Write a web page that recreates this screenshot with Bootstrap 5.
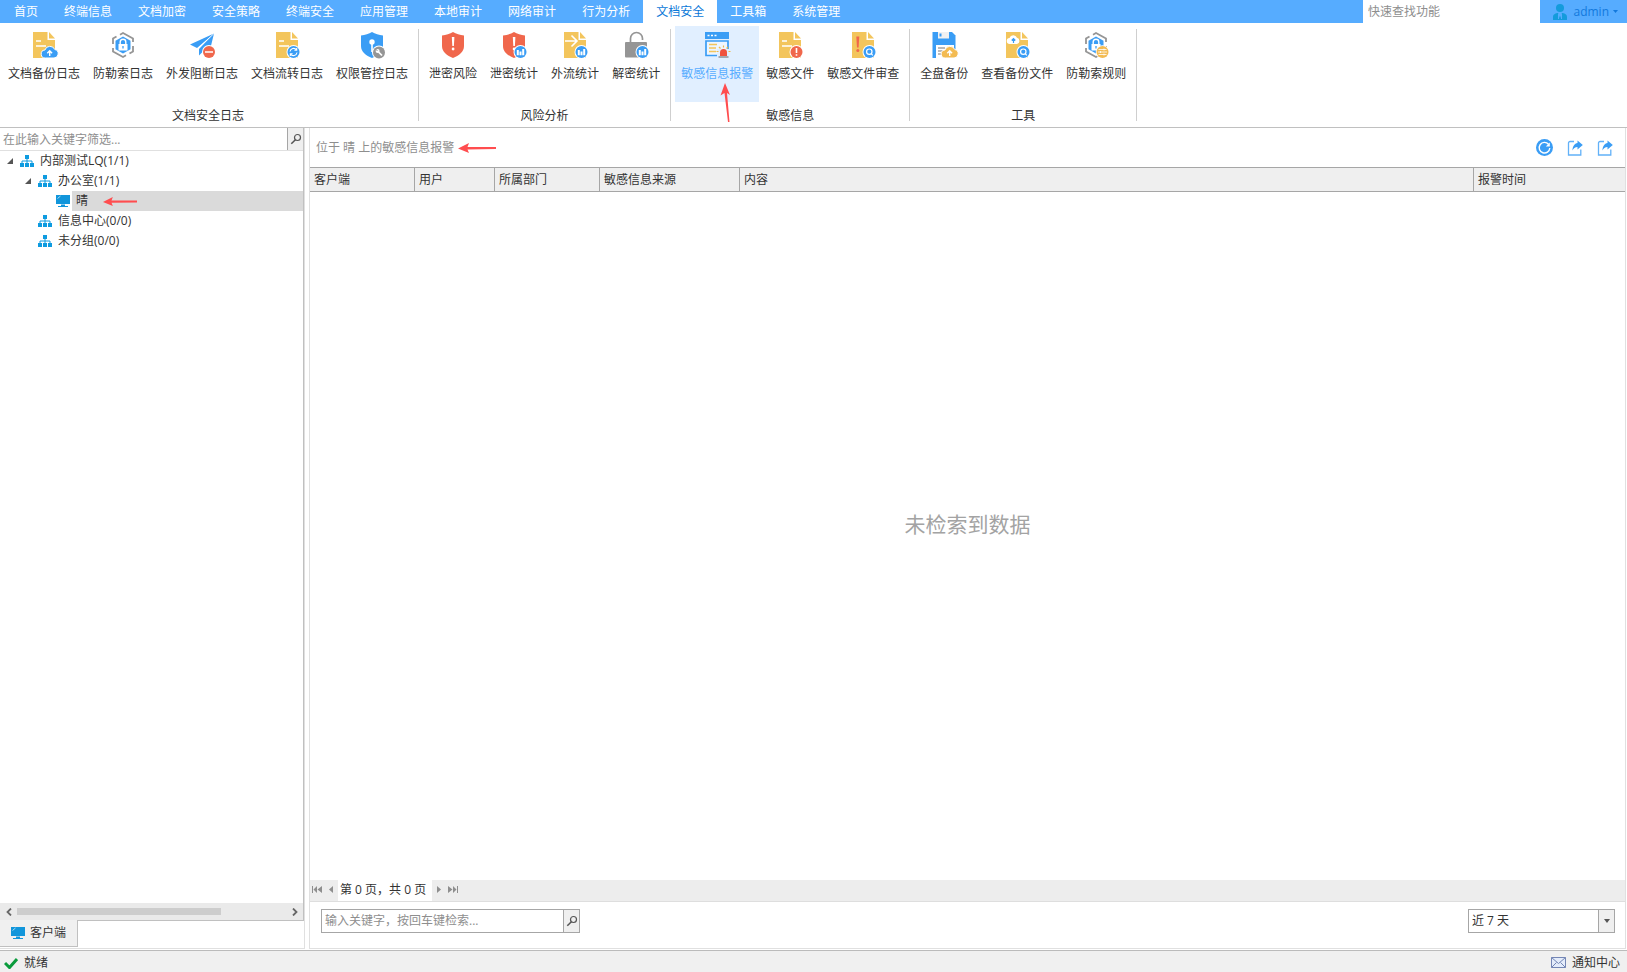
<!DOCTYPE html>
<html lang="zh-CN">
<head>
<meta charset="utf-8">
<meta name="viewport" content="width=device-width, initial-scale=1">
<title>文档安全</title>
<link href="https://cdn.jsdelivr.net/npm/bootstrap@5.3.0/dist/css/bootstrap.min.css" rel="stylesheet">
<style>
:root{--sky:#56acff;--blue:#3a9df5;--line:#a6a6a6;--soft:#c0c0c0;--pale:#e0e0e0;--bar:#efefef}
body{font:12px/20px "Open Sans","Noto Sans CJK SC",sans-serif;color:#333;background:#fff}
svg{display:block;flex:none}
button,input,select{font:inherit;color:inherit;border:0;background:none;padding:0;border-radius:0}
input::placeholder{color:#8e8e8e;opacity:1}
.topbar{background:var(--sky);height:23px}
.topbar .nav{padding-left:1px}
.topbar .nav-link{padding:0 13px;line-height:23px;color:#fff;border-radius:0}
.topbar .nav-link.active{background:#fff;color:#0a78d8}
.quick{width:177px;height:23px;padding:0 5px 1px;background:#fff}
.user{width:87px;color:#1279dd;padding:0 9px 0 12px}
.ribbon{border-bottom:1px solid var(--soft);height:105px;padding-top:3px;flex:none}
.rgroup{position:relative;padding:0 5px 0 4px}
.rgroup:first-child{padding-left:2px}
.rgroup::after{content:"";position:absolute;right:0;top:3px;height:92px;border-right:1px solid #cfcfcf}
.ritems{display:flex;gap:1px}
.ritem{display:flex;flex-direction:column;align-items:center;gap:3px;padding:3px 6px 0;height:76px;color:#333;position:relative;white-space:nowrap}
.ritem.active{background:#e1efff;color:var(--sky)}
.ritem svg.ico{width:32px;height:32px}
.caption{line-height:28px}
.arrow{position:absolute;fill:#ff4d4f}
.arrow-up{left:45px;top:57px}
.arrow-row{left:31px;top:5px}
.panes{min-height:0}
.side{width:305px;border-right:1px solid var(--pale);border-bottom:1px solid var(--pale);margin-bottom:1px}
.tree-box{border-right:1px solid var(--soft);border-bottom:1px solid var(--soft)}
.filter{height:23px;border-bottom:1px solid var(--pale)}
.filter input{padding:2px 3px 0}
.find{width:16px;background:var(--bar);border-left:1px solid var(--line);display:flex;align-items:center;justify-content:center}
.tree-row{height:20px;display:flex;align-items:center}
.tree-row .caret{width:20px;padding-left:7px}
.lv2 .caret{width:38px;padding-left:25px}
.lv3 .caret{width:56px}
.tree-row .label{padding:0 4px;margin-left:2px}
.tree-row .selected{background:#dadada;position:relative;flex:1}
.hscroll{height:17px;background:#eaeaea}
.hscroll button{width:17px;height:17px;display:flex;align-items:center;justify-content:center}
.hscroll .rail{flex:1;height:7px}
.hscroll .thumb{background:#cdcdcd;width:76%;height:7px}
.side-tabs{padding-bottom:1px}
.side-tab{height:27px;padding:0 11px;background:#f0f0f0;border-right:1px solid var(--soft);border-bottom:1px solid var(--soft);margin-top:-1px;z-index:1;gap:5px}
.work{border:solid var(--pale);border-width:0 1px 1px;margin:0 1px 1px 4px;min-width:0}
.crumb{height:39px;padding:0 12px 0 6px;color:#8e8e8e}
.tools{gap:14px}
.grid-head{table-layout:fixed;width:100%;border-collapse:separate;border-spacing:0}
.grid-head th{font-weight:400;height:25px;line-height:23px;padding:0 4px;background:var(--bar);border:solid var(--line);border-width:1px 1px 1px 0}
.grid-head th:last-child{border-right:0}
.c-client,.c-dept{width:105px}.c-user{width:80px}.c-from{width:140px}.c-time{width:151px}
.nodata{font-size:21px;color:#a3a3a3;line-height:30px;padding-bottom:24px}
.pager{height:22px;background:#ededed;border-bottom:1px solid #dedede}
.pager button{height:19px;display:flex;align-items:center;justify-content:center;width:14px}
.pager .pageno{background:#fff;padding:0 2px;width:94px;white-space:nowrap}
.searchbar{height:46px;padding:7px 10px 0 11px}
.fieldbox{height:24px;border:1px solid var(--line)}
.fieldbox input,.fieldbox select{padding:0 3px;outline:0;flex:1;min-width:0}
.kw{width:259px}
.range{width:147px;position:relative}
.range select{appearance:none;padding-right:20px}
.range .drop{position:absolute;right:0;top:0;bottom:0;width:16px;pointer-events:none}
.statusbar{height:22px;border-top:1px solid #bbb;background:#f0f0f0;padding:2px 7px 0 4px;flex:none}
.statusbar,.statusbar a{gap:6px}
</style>
</head>
<body class="vh-100 d-flex flex-column overflow-hidden">

<svg width="0" height="0" class="position-absolute" aria-hidden="true">
  <defs>
    <g id="doc"><path d="M5 3h14.500v8H27v18H5z" fill="#f3c55c"/><path d="M21 3l6 6.500h-6z" fill="#f3c55c"/></g>
    <g id="doclines"><path d="M8 12h5M8 17h10" stroke="#fff" stroke-width="1.300"/></g>
    <g id="shield"><path d="M16 3c3 2 7 3 11 3.500V17c0 6-5 9.500-11 12C10 26.500 5 23 5 17V6.500C9 6 13 5 16 3z" fill="#f0674c"/><path d="M14.800 8h2.600l-.5 9h-1.600z" fill="#fff"/><circle cx="16.100" cy="20" r="1.400" fill="#fff"/></g>
    <g id="lens"><circle cx="22.500" cy="23" r="7" fill="#fff"/><circle cx="22.500" cy="23" r="6" fill="#3a9df5"/><circle cx="22.300" cy="22.700" r="2.700" fill="none" stroke="#fff" stroke-width="1.200"/><path d="M24.200 24.700l1.600 1.600" stroke="#fff" stroke-width="1.200"/></g>
    <g id="chart"><circle cx="22.500" cy="23" r="7" fill="#fff"/><circle cx="22.500" cy="23" r="6" fill="#3a9df5"/><path d="M18.800 21h2v5.200h-2zM21.500 22.500h2v3.700h-2zM24.200 20h2v6.200h-2z" fill="#fff"/></g>
    <g id="hexa"><path d="M13 5.700l3-1.700 10 5.500v3.500M26 17v5.500l-3.500 2M19 26.300L16 28 6 22.500V19M6 15V9.500l3.500-2" fill="none" stroke="#959595" stroke-width="1.800"/><path d="M16 7.500l7.500 4.200v8.600L16 24.500l-7.500-4.200v-8.600z" fill="#3a9df5"/><path d="M11.500 15h9v6.500h-9z" fill="#fff"/><path d="M13.200 15v-2a2.800 2.800 0 0 1 5.600 0v2" fill="none" stroke="#fff" stroke-width="1.400"/><path d="M16 17v2.500" stroke="#3a9df5" stroke-width="1.300"/></g>
    <g id="cloud"><path d="M17.500 29a4 4 0 0 1-.6-8 5.300 5.300 0 0 1 9.900-.5A4.300 4.300 0 0 1 26 29z" stroke="#fff"/><path d="M21.700 27v-5M19.300 24.200l2.400-2.500 2.400 2.500" fill="none" stroke="#fff" stroke-width="1.400"/></g>
    <symbol id="org" viewBox="0 0 14 14"><path d="M5 1h4v4H5zM0 9h4v4H0zM5 9h4v4H5zM10 9h4v4h-4z" fill="#0e9be0"/><path d="M7 4v5M2 9V7h10v2" fill="none" stroke="#0e9be0"/></symbol>
    <symbol id="pc" viewBox="0 0 14 14"><path d="M0 1h14v9H0zM5 10.500h4V12h3v1H2v-1h3z" fill="#1296db"/><path d="M1.500 4.500l3-2.500" stroke="#a5daf6"/></symbol>
    <symbol id="mag" viewBox="0 0 12 12"><circle cx="7.500" cy="4.500" r="3" fill="none" stroke="#555" stroke-width="1.200"/><path d="M5.400 6.700L1.300 10.800" stroke="#555" stroke-width="1.500"/></symbol>
    <symbol id="open" viewBox="0 0 6 6"><path d="M6 0v6H0z" fill="#555"/></symbol>
    <symbol id="share" viewBox="0 0 16 16"><path d="M7 1.500H3A1.500 1.500 0 0 0 1.500 3v12h12.300V9.500" fill="none" stroke="#62b1f8" stroke-width="1.300"/><path d="M10.500.5L15.800 5l-5.300 4.500V7C8 7 6.500 8.300 5.500 10.500 5.500 6.500 7.500 3.500 10.500 3z" fill="#3a9df5"/></symbol>
    <symbol id="arr" viewBox="0 0 38 10"><path d="M0 5.500L11 0 9.500 4 38 4v2L9.500 6.500l1.500 3.500z"/></symbol>
  </defs>
</svg>

<header class="topbar d-flex flex-shrink-0">
  <nav class="nav flex-nowrap me-auto text-nowrap">
    <a class="nav-link" href="#">首页</a><a class="nav-link" href="#">终端信息</a><a class="nav-link" href="#">文档加密</a><a class="nav-link" href="#">安全策略</a><a class="nav-link" href="#">终端安全</a><a class="nav-link" href="#">应用管理</a><a class="nav-link" href="#">本地审计</a><a class="nav-link" href="#">网络审计</a><a class="nav-link" href="#">行为分析</a><a class="nav-link active" href="#" aria-current="page">文档安全</a><a class="nav-link" href="#">工具箱</a><a class="nav-link" href="#">系统管理</a>
  </nav>
  <input class="quick" type="text" placeholder="快速查找功能" aria-label="快速查找功能">
  <button class="user d-flex align-items-center" type="button">
    <svg width="16" height="16" viewBox="0 0 16 16"><circle cx="8" cy="4" r="4" fill="#149bdc"/><path d="M1 16v-3c0-3 3-4 5-4l2 5 2-5c2 0 5 1 5 4v3z" fill="#149bdc"/><path d="M6.500 10v5M9.500 10v5" stroke="#56acff"/></svg>
    <span class="ms-auto me-1">admin</span>
    <svg width="5" height="3" viewBox="0 0 5 3"><path d="M0 0h5L2.500 3z" fill="#1279dd"/></svg>
  </button>
</header>

<section class="ribbon d-flex" aria-label="功能区">
  <div class="rgroup">
    <div class="ritems">
      <button class="ritem" type="button"><svg class="ico" viewBox="0 0 32 32"><use href="#doc"/><use href="#doclines"/><use href="#cloud" fill="#3a9df5"/></svg><span>文档备份日志</span></button>
      <button class="ritem" type="button"><svg class="ico" viewBox="0 0 32 32"><use href="#hexa"/></svg><span>防勒索日志</span></button>
      <button class="ritem" type="button"><svg class="ico" viewBox="0 0 32 32"><path d="M28 4.500L4 15.500l7 3.500zM28 4.500L13 20v6.500l4-4 6 2.500z" fill="#3a9df5"/><path d="M28 4.500L12 19.500" stroke="#fff" stroke-width=".7"/><circle cx="23" cy="23" r="7" fill="#fff"/><circle cx="23" cy="23" r="6" fill="#f0674c"/><path d="M19 23h8" stroke="#fff" stroke-width="1.500"/></svg><span>外发阻断日志</span></button>
      <button class="ritem" type="button"><svg class="ico" viewBox="0 0 32 32"><use href="#doc"/><use href="#doclines"/><circle cx="22.500" cy="23" r="7" fill="#fff"/><circle cx="22.500" cy="23" r="6" fill="#3a9df5"/><path d="M19 22.500a3.600 3.600 0 0 1 6.500-1.600M26 23.500a3.600 3.600 0 0 1-6.500 1.600M25.700 19v2.300h-2.300M19.300 27v-2.300h2.300" fill="none" stroke="#fff" stroke-width="1.100"/></svg><span>文档流转日志</span></button>
      <button class="ritem" type="button"><svg class="ico" viewBox="0 0 32 32"><path d="M16 3c3 2 7 3 11 3.500V17c0 6-5 9.500-11 12C10 26.500 5 23 5 17V6.500C9 6 13 5 16 3z" fill="#3a9df5"/><circle cx="16" cy="13" r="2.700" fill="#fff"/><path d="M16 14v9" stroke="#fff" stroke-width="1.600"/><circle cx="23" cy="23.500" r="7" fill="#fff"/><circle cx="23" cy="23.500" r="6" fill="#959595"/><path d="M22.500 23l3.500 3.500" stroke="#fff" stroke-width="1.700"/><circle cx="21.600" cy="22" r="2" fill="#fff"/><path d="M19.500 20l2 2" stroke="#959595"/></svg><span>权限管控日志</span></button>
    </div>
    <div class="caption text-center">文档安全日志</div>
  </div>
  <div class="rgroup">
    <div class="ritems">
      <button class="ritem" type="button"><svg class="ico" viewBox="0 0 32 32"><use href="#shield"/></svg><span>泄密风险</span></button>
      <button class="ritem" type="button"><svg class="ico" viewBox="0 0 32 32"><use href="#shield"/><use href="#chart"/></svg><span>泄密统计</span></button>
      <button class="ritem" type="button"><svg class="ico" viewBox="0 0 32 32"><use href="#doc"/><path d="M6 12h11M12.500 6.500L18 12l-5.500 5.500" fill="none" stroke="#fff" stroke-width="1.600"/><use href="#chart"/></svg><span>外流统计</span></button>
      <button class="ritem" type="button"><svg class="ico" viewBox="0 0 32 32"><path d="M10.500 14V9.500a6 6 0 0 1 12 0V11" fill="none" stroke="#959595" stroke-width="1.700"/><rect x="5" y="13" width="22" height="15.500" rx="1" fill="#959595"/><use href="#chart"/></svg><span>解密统计</span></button>
    </div>
    <div class="caption text-center">风险分析</div>
  </div>
  <div class="rgroup">
    <div class="ritems">
      <button class="ritem active" type="button"><svg class="ico" viewBox="0 0 32 32"><path d="M4 3h24v7H4z" fill="#3a9df5"/><path d="M6.500 6.500h2M10 6.500h2M13.500 6.500h2" stroke="#fff" stroke-width="1.700"/><path d="M5 12h22v14.500H5z" fill="#eef6ff" stroke="#3a9df5" stroke-width="1.700"/><path d="M8 15.500h8M8 19h7M8 22.500h7" stroke="#f3c55c" stroke-width="1.500"/><path d="M16 20h14v9H16z" fill="#e1efff"/><path d="M19 27v-3.500a3.500 3.500 0 0 1 7 0V27z" fill="#f0523d"/><path d="M17.500 27h10v2h-10z" fill="#a3a9b0"/><path d="M22.500 16.500v2M18 18l1.500 1.500M27 18l-1.500 1.500M15.500 22.500h2M27.500 22.500h2" stroke="#eeb94a" stroke-width="1.200"/></svg><span>敏感信息报警</span>
        <svg class="arrow arrow-up" width="12" height="40" viewBox="0 0 12 40"><path d="M5 0L10 12 7 10 9.500 39H8L4.500 10 .5 12.500z"/></svg></button>
      <button class="ritem" type="button"><svg class="ico" viewBox="0 0 32 32"><use href="#doc"/><use href="#doclines"/><circle cx="22.500" cy="23" r="7" fill="#fff"/><circle cx="22.500" cy="23" r="6" fill="#f0674c"/><path d="M22.500 19v5M22.500 25.200v1.500" stroke="#fff" stroke-width="1.600"/></svg><span>敏感文件</span></button>
      <button class="ritem" type="button"><svg class="ico" viewBox="0 0 32 32"><use href="#doc"/><path d="M9.300 7.500h3l-.7 11h-1.600z" fill="#f0674c"/><circle cx="10.800" cy="21.500" r="1.500" fill="#f0674c"/><use href="#lens"/></svg><span>敏感文件审查</span></button>
    </div>
    <div class="caption text-center">敏感信息</div>
  </div>
  <div class="rgroup">
    <div class="ritems">
      <button class="ritem" type="button"><svg class="ico" viewBox="0 0 32 32"><path d="M4.500 3H24l3.500 3.500V29h-23z" fill="#3a9df5"/><path d="M10 3h11v6.500H10z" fill="#f1f1f1"/><path d="M11.500 4.500h2v3h-2z" fill="#3a9df5"/><path d="M8 16h18v13H8z" fill="#fff"/><path d="M10 19h7M10 22h5M10 25h4" stroke="#777" stroke-width="1.200"/><use href="#cloud" fill="#f3bb52"/></svg><span>全盘备份</span></button>
      <button class="ritem" type="button"><svg class="ico" viewBox="0 0 32 32"><use href="#doc"/><path d="M9 15a3 3 0 0 1-.5-6 4 4 0 0 1 7.500-.2A3.200 3.200 0 0 1 16 15z" fill="#fff"/><path d="M12.500 14v-4M10.700 11.500l1.800-1.900 1.800 1.900" fill="none" stroke="#3a9df5" stroke-width="1.200"/><use href="#lens"/></svg><span>查看备份文件</span></button>
      <button class="ritem" type="button"><svg class="ico" viewBox="0 0 32 32"><use href="#hexa"/><circle cx="22.500" cy="23" r="6.800" fill="#fff"/><circle cx="22.500" cy="23" r="6" fill="#f3bb52"/><path d="M18.500 20.500h8M18 23h9M18.500 25.500h8M24 19.500v2M20.500 22v2M24 24.500v2" stroke="#fff" stroke-width=".8"/></svg><span>防勒索规则</span></button>
    </div>
    <div class="caption text-center">工具</div>
  </div>
</section>

<main class="panes d-flex flex-grow-1">
  <aside class="side d-flex flex-column flex-shrink-0">
    <div class="tree-box d-flex flex-column flex-grow-1">
      <div class="filter d-flex">
        <input class="flex-grow-1" type="text" placeholder="在此输入关键字筛选..." aria-label="筛选">
        <button class="find" type="button" aria-label="查找"><svg width="12" height="12"><use href="#mag"/></svg></button>
      </div>
      <ul class="list-unstyled mb-0 flex-grow-1">
        <li><div class="tree-row"><span class="caret"><svg width="6" height="6"><use href="#open"/></svg></span><svg width="14" height="14"><use href="#org"/></svg><span class="label">内部测试LQ(1/1)</span></div>
          <ul class="list-unstyled lv2">
            <li><div class="tree-row"><span class="caret"><svg width="6" height="6"><use href="#open"/></svg></span><svg width="14" height="14"><use href="#org"/></svg><span class="label">办公室(1/1)</span></div>
              <ul class="list-unstyled lv3">
                <li><div class="tree-row"><span class="caret"></span><svg width="14" height="14"><use href="#pc"/></svg><span class="label selected">晴<svg class="arrow arrow-row" width="34" height="11"><use href="#arr"/></svg></span></div></li>
              </ul></li>
            <li><div class="tree-row"><span class="caret"></span><svg width="14" height="14"><use href="#org"/></svg><span class="label">信息中心(0/0)</span></div></li>
            <li><div class="tree-row"><span class="caret"></span><svg width="14" height="14"><use href="#org"/></svg><span class="label">未分组(0/0)</span></div></li>
          </ul></li>
      </ul>
      <div class="hscroll d-flex align-items-center">
        <button type="button" aria-label="向左"><svg width="6" height="8" viewBox="0 0 6 8"><path d="M5 .5L1.500 4 5 7.500" fill="none" stroke="#666" stroke-width="1.800"/></svg></button>
        <div class="rail"><div class="thumb"></div></div>
        <button type="button" aria-label="向右"><svg width="6" height="8" viewBox="0 0 6 8"><path d="M1 .5L4.500 4 1 7.500" fill="none" stroke="#666" stroke-width="1.800"/></svg></button>
      </div>
    </div>
    <div class="side-tabs d-flex">
      <button class="side-tab d-flex align-items-center" type="button"><svg width="14" height="14"><use href="#pc"/></svg>客户端</button>
    </div>
  </aside>

  <section class="work d-flex flex-column flex-grow-1">
    <div class="crumb d-flex align-items-center">
      <span>位于 晴 上的敏感信息报警</span>
      <svg class="ms-1" width="38" height="10" fill="#ff4d4f"><use href="#arr"/></svg>
      <div class="tools d-flex align-items-center ms-auto">
        <button type="button" aria-label="刷新"><svg width="17" height="17" viewBox="0 0 17 17"><circle cx="8.500" cy="8.500" r="8.500" fill="#3a9df5"/><path d="M12.500 5.200a5.300 5.300 0 1 0 1.300 3.800" fill="none" stroke="#fff" stroke-width="1.400"/><path d="M13.800 3.500v4h-4z" fill="#fff"/></svg></button>
        <button type="button" aria-label="导出"><svg width="16" height="16"><use href="#share"/></svg></button>
        <button type="button" aria-label="全部导出"><svg width="16" height="16"><use href="#share"/></svg></button>
      </div>
    </div>
    <table class="grid-head">
      <colgroup><col class="c-client"><col class="c-user"><col class="c-dept"><col class="c-from"><col><col class="c-time"></colgroup>
      <thead><tr><th>客户端</th><th>用户</th><th>所属部门</th><th>敏感信息来源</th><th>内容</th><th>报警时间</th></tr></thead>
    </table>
    <div class="nodata flex-grow-1 d-flex align-items-center justify-content-center">未检索到数据</div>
    <div class="pager d-flex">
      <button type="button" aria-label="首页"><svg width="10" height="7" viewBox="0 0 10 7"><path d="M0 0h1v7H0zM5 0v7L1.500 3.500zM10 0v7L5.500 3.500z" fill="#8e8e8e"/></svg></button>
      <button type="button" aria-label="上一页"><svg width="4" height="7" viewBox="0 0 4 7"><path d="M4 0v7L0 3.500z" fill="#8e8e8e"/></svg></button>
      <span class="pageno">第 0 页，共 0 页</span>
      <button type="button" aria-label="下一页"><svg width="4" height="7" viewBox="0 0 4 7"><path d="M0 0v7l4-3.500z" fill="#8e8e8e"/></svg></button>
      <button type="button" aria-label="末页"><svg width="10" height="7" viewBox="0 0 10 7"><path d="M9 0h1v7H9zM0 0v7l4.500-3.500zM5 0v7l3.500-3.500z" fill="#8e8e8e"/></svg></button>
    </div>
    <div class="searchbar d-flex justify-content-between">
      <div class="fieldbox kw d-flex">
        <input type="text" placeholder="输入关键字，按回车键检索..." aria-label="检索关键字">
        <button class="find" type="button" aria-label="检索"><svg width="12" height="12"><use href="#mag"/></svg></button>
      </div>
      <div class="fieldbox range d-flex">
        <select aria-label="时间范围"><option>近 7 天</option></select>
        <span class="find drop"><svg width="6" height="4" viewBox="0 0 6 4"><path d="M0 0h6L3 4z" fill="#555"/></svg></span>
      </div>
    </div>
  </section>
</main>

<footer class="statusbar d-flex align-items-center">
  <svg width="14" height="12" viewBox="0 0 14 12"><path d="M1 6l4.500 4.500L13 2" fill="none" stroke="#0a9b3c" stroke-width="3"/></svg>
  <span>就绪</span>
  <a class="ms-auto d-flex align-items-center text-reset text-decoration-none" href="#"><svg width="15" height="11" viewBox="0 0 15 11"><path d="M.5.5h14v10H.5z" fill="#e4ecfa" stroke="#7486b5"/><path d="M.5.5l7 6 7-6M.5 10.500l5-5M14.500 10.500l-5-5" fill="none" stroke="#7486b5"/></svg>通知中心</a>
</footer>
<script src="https://cdn.jsdelivr.net/npm/bootstrap@5.3.0/dist/js/bootstrap.bundle.min.js"></script>
</body>
</html>
